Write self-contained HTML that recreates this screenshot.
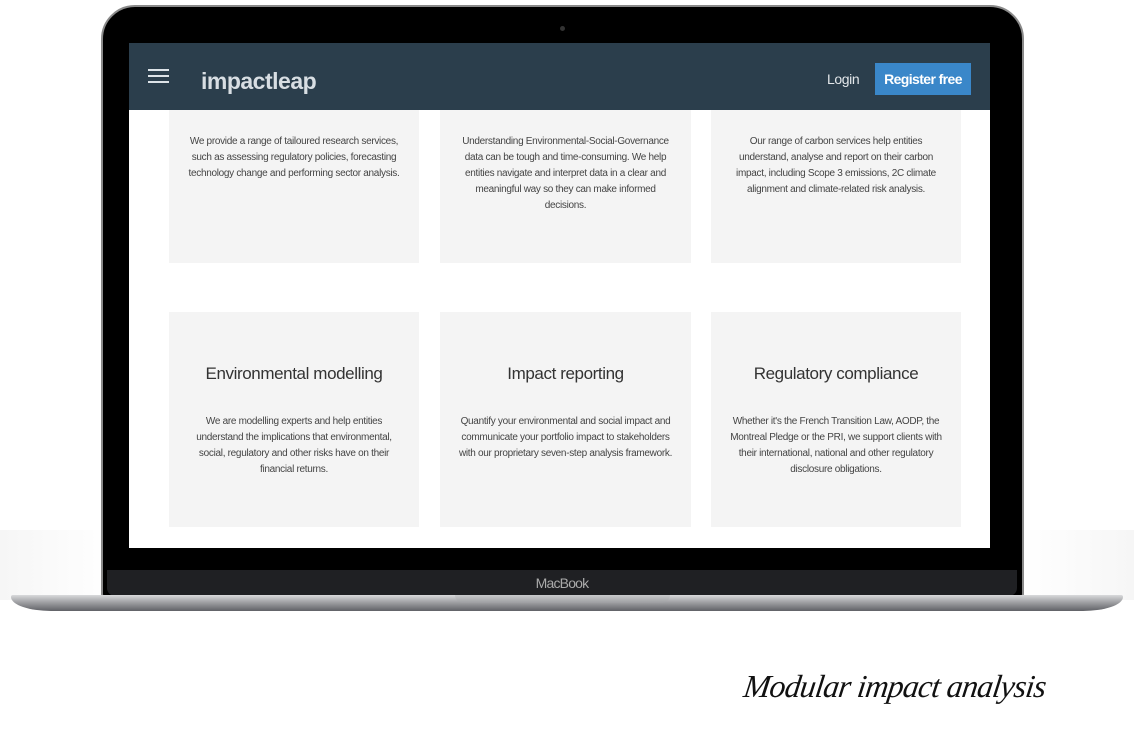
<!DOCTYPE html>
<html><head><meta charset="utf-8"><style>
*{margin:0;padding:0;box-sizing:border-box}
body{width:1134px;height:756px;background:#fff;position:relative;overflow:hidden;font-family:"Liberation Sans",sans-serif}
.abs{position:absolute}
.body{left:101px;top:5px;width:923px;height:595px;background:#000;border-radius:34px 34px 6px 6px;border:2px solid #8a8a8a}
.screen{left:129px;top:43px;width:861px;height:505px;background:#fff;overflow:hidden}
.nav{left:0;top:0;width:861px;height:67px;background:#2b3e4c}
.card{background:#f4f4f4;text-align:center;color:#444;font-size:10px;line-height:16px;letter-spacing:-0.3px}
.card h3{font-weight:normal;font-size:17px;color:#333;letter-spacing:-0.4px;margin-top:54px;margin-bottom:32px}
.chin{left:107px;top:570px;width:910px;height:26px;background:#1f2023;border-radius:0 0 8px 8px;color:#aaa;font-size:14px;text-align:center;line-height:26px;letter-spacing:-0.8px}
.base{left:11px;top:595px;width:1112px;height:16px;background:linear-gradient(#d9dadc,#a6a7aa 40%,#606166);border-radius:2px 2px 40px 40px/2px 2px 14px 14px}
.notch{left:455px;top:595px;width:215px;height:8px;background:linear-gradient(#c9cacc,#9d9ea1);border-radius:0 0 8px 8px}
</style></head><body>
<div class="abs" style="left:0;top:530px;width:1134px;height:70px;background:linear-gradient(90deg,#f6f6f6,#fff 10%,#fff 90%,#f6f6f6)"></div>
<div class="abs body"></div>
<div class="abs" style="left:560px;top:26px;width:5px;height:5px;border-radius:50%;background:#333"></div>
<div class="abs screen">
  <div class="abs nav">
    <div class="abs" style="left:19px;top:26px;width:21px;height:2px;background:#dde3e8;box-shadow:0 6px 0 #dde3e8,0 12px 0 #dde3e8"></div>
    <div class="abs" style="left:72px;top:25px;color:#d8dee3;font-size:23px;font-weight:bold;letter-spacing:-0.5px">impactleap</div>
    <div class="abs" style="left:698px;top:28px;color:#e3e7ea;font-size:14px;letter-spacing:-0.4px">Login</div>
    <div class="abs" style="left:746px;top:20px;width:96px;height:32px;background:#3a87c9;color:#fff;font-size:14px;font-weight:bold;text-align:center;line-height:32px;letter-spacing:-0.6px">Register free</div>
  </div>
  <div class="abs card" style="left:40px;top:67px;width:250px;height:153px;padding-top:24px">We provide a range of tailoured research services,<br>such as assessing regulatory policies, forecasting<br>technology change and performing sector analysis.</div>
  <div class="abs card" style="left:311px;top:67px;width:251px;height:153px;padding-top:24px">Understanding Environmental-Social-Governance<br>data can be tough and time-consuming. We help<br>entities navigate and interpret data in a clear and<br>meaningful way so they can make informed<br>decisions.</div>
  <div class="abs card" style="left:582px;top:67px;width:250px;height:153px;padding-top:24px">Our range of carbon services help entities<br>understand, analyse and report on their carbon<br>impact, including Scope 3 emissions, 2C climate<br>alignment and climate-related risk analysis.</div>
  <div class="abs card" style="left:40px;top:269px;width:250px;height:215px"><h3>Environmental modelling</h3>We are modelling experts and help entities<br>understand the implications that environmental,<br>social, regulatory and other risks have on their<br>financial returns.</div>
  <div class="abs card" style="left:311px;top:269px;width:251px;height:215px"><h3>Impact reporting</h3>Quantify your environmental and social impact and<br>communicate your portfolio impact to stakeholders<br>with our proprietary seven-step analysis framework.</div>
  <div class="abs card" style="left:582px;top:269px;width:250px;height:215px"><h3>Regulatory compliance</h3>Whether it's the French Transition Law, AODP, the<br>Montreal Pledge or the PRI, we support clients with<br>their international, national and other regulatory<br>disclosure obligations.</div>
</div>
<div class="abs chin">MacBook</div>
<div class="abs base"></div>
<div class="abs notch"></div>
<div class="abs" style="left:744px;top:668px;font-family:'Liberation Serif',serif;font-style:italic;font-size:32px;color:#111;letter-spacing:-0.8px;transform:skewX(-8deg);white-space:nowrap">Modular impact analysis</div>
</body></html>
